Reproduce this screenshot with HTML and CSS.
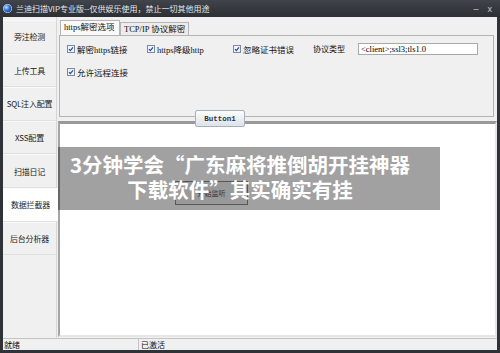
FILE: index.html
```html
<!DOCTYPE html>
<html lang="zh-CN">
<head>
    <meta charset="UTF-8">
    <title>兰迪扫描VIP专业版</title>
    <link rel="stylesheet" href="styles.css">
</head>
<body>

    <div class="window">
        <div class="titlebar">
            <svg class="app-icon" width="9" height="9" viewBox="0 0 10 10">
                <defs>
                    <radialGradient id="g" cx="35%" cy="35%" r="65%">
                        <stop offset="0" stop-color="#cfe6ff"/>
                        <stop offset="0.5" stop-color="#3b7fe0"/>
                        <stop offset="1" stop-color="#123f9a"/>
                    </radialGradient>
                </defs>
                <circle cx="5" cy="5" r="4.5" fill="url(#g)" stroke="#dfe8f5" stroke-width="0.8"/>
            </svg>
            <span class="title">兰迪扫描VIP专业版--仅供娱乐使用，禁止一切其他用途</span>
            <span class="ctrl">–</span>
            <span class="ctrl close">x</span>
        </div>

        <div class="client">
            <ul class="nav">
                <li>旁注检测</li>
                <li>上传工具</li>
                <li>SQL注入配置</li>
                <li>XSS配置</li>
                <li>扫描日记</li>
                <li class="active">数据拦截器</li>
                <li>后台分析器</li>
            </ul>

            <div class="main">
                <div class="tabs">
                    <div class="tab-head">
                        <span class="tab active">https解密选项</span>
                        <span class="tab">TCP/IP 协议解密</span>
                    </div>
                    <div class="tab-panel">
                        <div class="row">
                            <label class="chk"><svg width="8" height="8" viewBox="0 0 8 8"><rect x="0.5" y="0.5" width="7" height="7" fill="#eef3fb" stroke="#7d8a9c"/><path d="M2 4.2 L3.3 5.6 L6 2.3" fill="none" stroke="#2346a6" stroke-width="1.2"/></svg>解密https链接</label>
                            <label class="chk"><svg width="8" height="8" viewBox="0 0 8 8"><rect x="0.5" y="0.5" width="7" height="7" fill="#eef3fb" stroke="#7d8a9c"/><path d="M2 4.2 L3.3 5.6 L6 2.3" fill="none" stroke="#2346a6" stroke-width="1.2"/></svg>https降级http</label>
                            <label class="chk"><svg width="8" height="8" viewBox="0 0 8 8"><rect x="0.5" y="0.5" width="7" height="7" fill="#eef3fb" stroke="#7d8a9c"/><path d="M2 4.2 L3.3 5.6 L6 2.3" fill="none" stroke="#2346a6" stroke-width="1.2"/></svg>忽略证书错误</label>
                            <span class="field-label">协议类型</span>
                            <input class="field" type="text" value="<client>;ssl3;tls1.0">
                        </div>
                        <div class="row">
                            <label class="chk"><svg width="8" height="8" viewBox="0 0 8 8"><rect x="0.5" y="0.5" width="7" height="7" fill="#eef3fb" stroke="#7d8a9c"/><path d="M2 4.2 L3.3 5.6 L6 2.3" fill="none" stroke="#2346a6" stroke-width="1.2"/></svg>允许远程连接</label>
                        </div>
                    </div>
                </div>

                <div class="output">
                    <button class="btn-listen">开始监听</button>
                    <div class="banner">3分钟学会“广东麻将推倒胡开挂神器<br>下载软件”其实确实有挂</div>
                </div>

                <button class="btn1">Button1</button>
            </div>
        </div>

        <div class="status">
            <span class="cell first">就绪</span>
            <span class="cell">已激活</span>
        </div>
    </div>

</body>
</html>
```

FILE: styles.css
```css
body {
    margin: 0;
    font-family: "Liberation Serif", "Noto Sans CJK SC", serif;
    font-size: 8.5px;
    color: #111;
}
.window {
    width: 500px;
    height: 353px;
    background-color: #2f3237;
    display: flex;
    flex-direction: column;
    overflow: hidden;
}
.titlebar {
    height: 17px;
    display: flex;
    align-items: center;
    padding: 0 8px 0 3px;
    background: linear-gradient(#40444b, #2c2f34);
    color: #e6e6e6;
    flex: none;
}
.app-icon {
    margin-right: 4px;
}
.title {
    font-family: "Noto Sans CJK SC", sans-serif;
    font-size: 8px;
    flex: 1;
}
.ctrl {
    color: #c8c8c8;
    font-family: "Liberation Sans", sans-serif;
    font-size: 9px;
    margin-left: 9px;
}
.client {
    height: 321px;
    margin: 0 3px;
    background-color: #f0f0f0;
    display: flex;
    flex: none;
}
.nav {
    list-style: none;
    margin: 0;
    padding: 3px 0 0 0;
    width: 53px;
    border-right: 1px solid #d6d6d6;
}
.nav li {
    height: 33.6px;
    box-sizing: border-box;
    border-bottom: 1px solid #e0e0e0;
    border-top: 1px solid #fafafa;
    display: flex;
    align-items: center;
    justify-content: center;
    font-family: "Noto Sans CJK SC", sans-serif;
    font-size: 8px;
    color: #222;
    white-space: nowrap;
    letter-spacing: -0.2px;
}
.nav li.active {
    background-color: #fff;
    margin-right: -2px;
}
.main {
    position: relative;
    margin-left: 1px;
    width: 439px;
    display: flex;
    flex-direction: column;
}
.tabs {
    height: 102px;
    padding-top: 3px;
    box-sizing: border-box;
}
.tab-head {
    display: flex;
    align-items: flex-end;
    height: 15px;
    padding-left: 2px;
}
.tab {
    height: 12px;
    line-height: 12px;
    padding: 0 3px;
    border: 1px solid #b4b4b4;
    border-bottom: none;
    background-color: #ececec;
    white-space: nowrap;
}
.tab.active {
    height: 14px;
    line-height: 13px;
    width: 52px;
    background-color: #f9f9f9;
}
.tab-panel {
    height: 82px;
    margin: 0 3px 0 1px;
    border: 1px solid #b4b4b4;
    box-sizing: border-box;
    background-color: #f0f0f0;
    padding: 6px 0 0 7px;
}
.row {
    display: grid;
    grid-template-columns: 80px 86px 80px 45px 120px;
    align-items: center;
    height: 13px;
    margin-bottom: 10px;
}
.chk {
    display: flex;
    align-items: center;
    gap: 2px;
    white-space: nowrap;
}
.field-label {
    font-family: "Noto Sans CJK SC", sans-serif;
    font-size: 8px;
}
.field {
    height: 12px;
    box-sizing: border-box;
    border: 1px solid #a8a8a8;
    padding: 0 2px;
    font-family: "Liberation Serif", serif;
    font-size: 8.5px;
    background-color: #fff;
}
.output {
    position: relative;
    margin-top: 2px;
    height: 216px;
    box-sizing: border-box;
    background-color: #fff;
    border-top: 3px solid #999;
    border-left: 2px solid #a4a4a4;
    border-right: 2px solid #e6e6e6;
    border-bottom: 2px solid #e6e6e6;
}
.btn-listen {
    position: absolute;
    left: 115px;
    top: 57px;
    width: 73px;
    height: 24px;
    border: 1px solid #8a8a8a;
    background-color: #f2f2f2;
    font-family: "Noto Sans CJK SC", sans-serif;
    font-size: 7px;
    color: #555;
}
.banner {
    position: absolute;
    left: -2px;
    top: 23px;
    width: 382px;
    height: 63px;
    box-sizing: border-box;
    padding: 5px 18px 0 0;
    background-color: rgba(0, 0, 0, 0.37);
    color: #fff;
    font-family: "Noto Sans CJK SC", sans-serif;
    font-weight: bold;
    font-size: 20.5px;
    line-height: 25px;
    text-align: center;
    white-space: nowrap;
}
.btn1 {
    position: absolute;
    left: 137px;
    top: 93px;
    width: 50px;
    height: 17px;
    padding: 0;
    border: 1px solid #a9b0b8;
    border-radius: 2px;
    background: linear-gradient(#fbfcfd, #dde3ea);
    font-family: "Liberation Mono", monospace;
    font-size: 7.5px;
    font-weight: bold;
    color: #333;
}
.status {
    height: 12px;
    margin: 0 3px;
    display: flex;
    background-color: #f0f0f0;
    border-top: 1px solid #c4c4c4;
    box-sizing: border-box;
    flex: none;
}
.cell {
    font-family: "Noto Sans CJK SC", sans-serif;
    font-size: 8px;
    line-height: 11px;
    flex: 1;
    padding-left: 1px;
}
.cell.first {
    flex: none;
    width: 134px;
    border-right: 1px solid #c4c4c4;
    margin-right: 1px;
}
```
